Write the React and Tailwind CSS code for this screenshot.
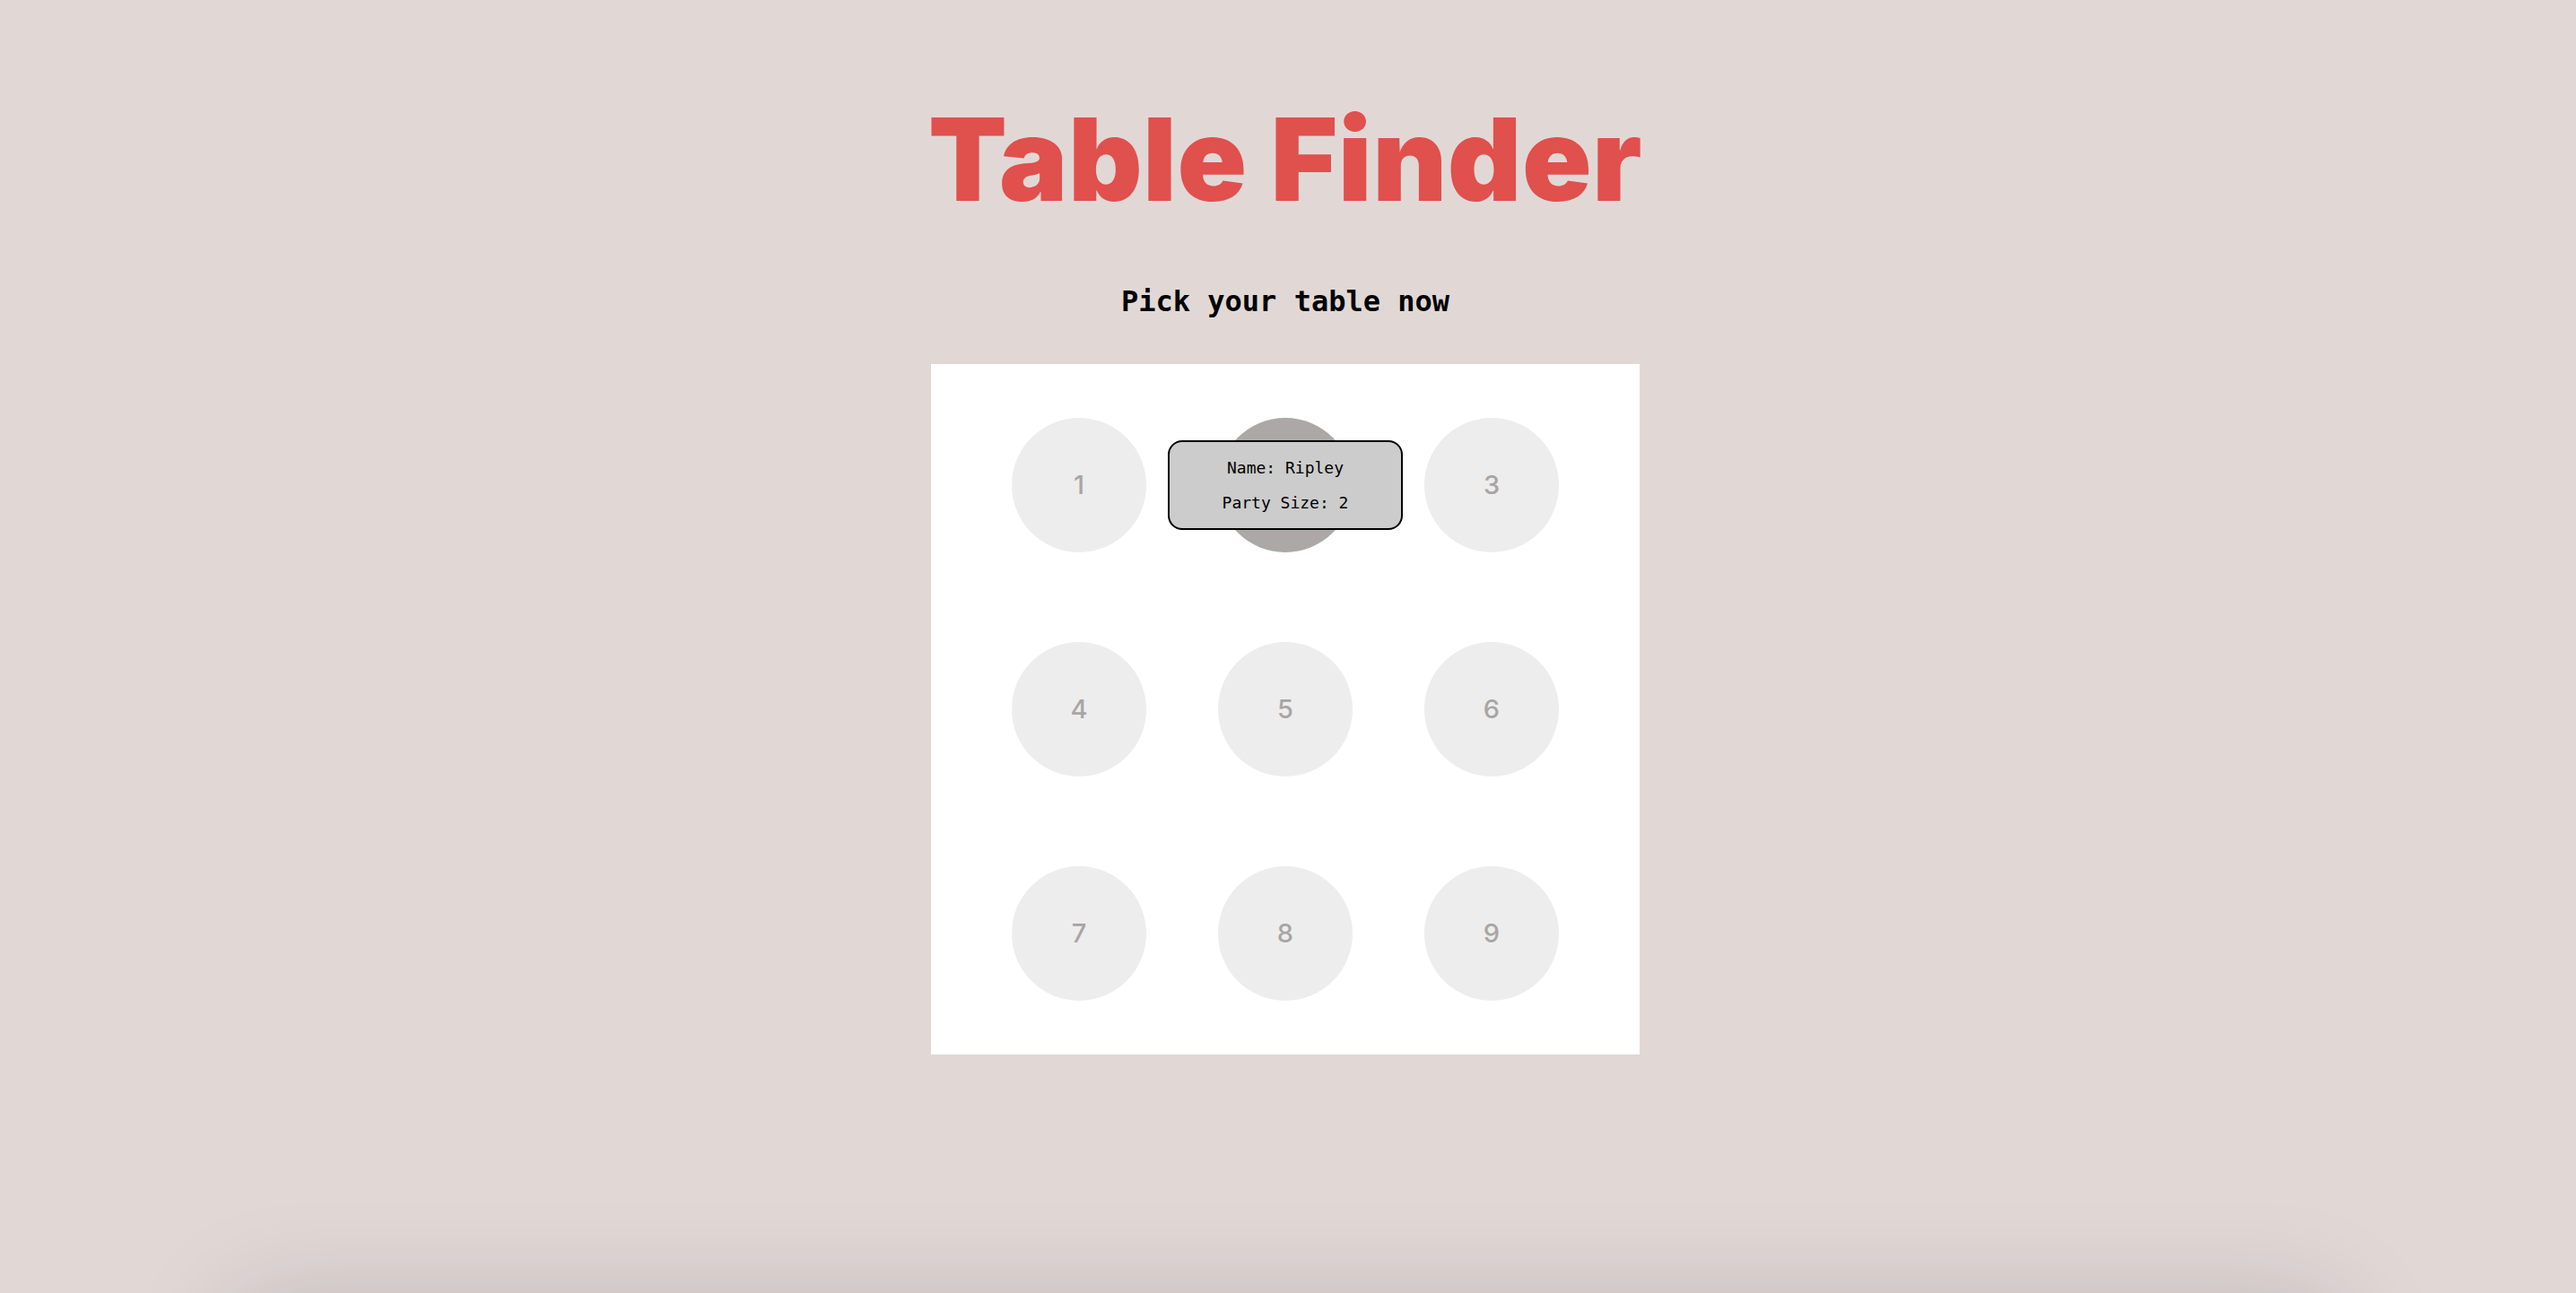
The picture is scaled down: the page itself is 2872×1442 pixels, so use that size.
import React from "react";

const tables = [1, 2, 3, 4, 5, 6, 7, 8, 9];

export default function App() {
  return (
    <div className="h-screen overflow-hidden bg-[#e1d8d6] flex flex-col items-center pr-[6px]">
      <h1
        className="pt-[114px] text-[128px] leading-none font-black text-[#e0504d] tracking-[0.5px]"
        style={{ fontFamily: "Inter, 'Noto Sans', sans-serif" }}
      >
        Table Finder
      </h1>
      <p
        className="mt-[78px] text-[32px] leading-none font-bold text-black"
        style={{ fontFamily: "'DejaVu Sans Mono', 'Liberation Mono', monospace" }}
      >
        Pick your table now
      </p>
      <div className="mt-[54px] bg-white px-[90px] py-[60px] grid grid-cols-[150px_150px_150px] gap-x-[80px] gap-y-[100px]">
        {tables.map((n) => (
          <div key={n} className="relative w-[150px] h-[150px]">
            <div
              className={
                "w-[150px] h-[150px] rounded-full flex items-center justify-center text-[29px] font-medium text-[#a9a5a5] " +
                (n === 2 ? "bg-[#aba8a7]" : "bg-[#ededed]")
              }
              style={{ fontFamily: "Inter, Roboto, sans-serif" }}
            >
              {n}
            </div>
            {n === 2 && (
              <div
                className="absolute left-1/2 top-1/2 -translate-x-1/2 -translate-y-1/2 w-[262px] h-[100px] bg-[#cccccc] border-2 border-black rounded-[16px] flex flex-col items-center justify-center gap-[21px] text-[18px] leading-[18px] text-black"
                style={{ fontFamily: "'DejaVu Sans Mono', 'Liberation Mono', monospace" }}
              >
                <span>Name: Ripley</span>
                <span>Party Size: 2</span>
              </div>
            )}
          </div>
        ))}
      </div>
      <div className="mt-[280px] w-[2340px] h-[400px] shrink-0 bg-[#e1d8d6] shadow-[0_0_110px_rgba(0,0,0,0.17)]"></div>
    </div>
  );
}
